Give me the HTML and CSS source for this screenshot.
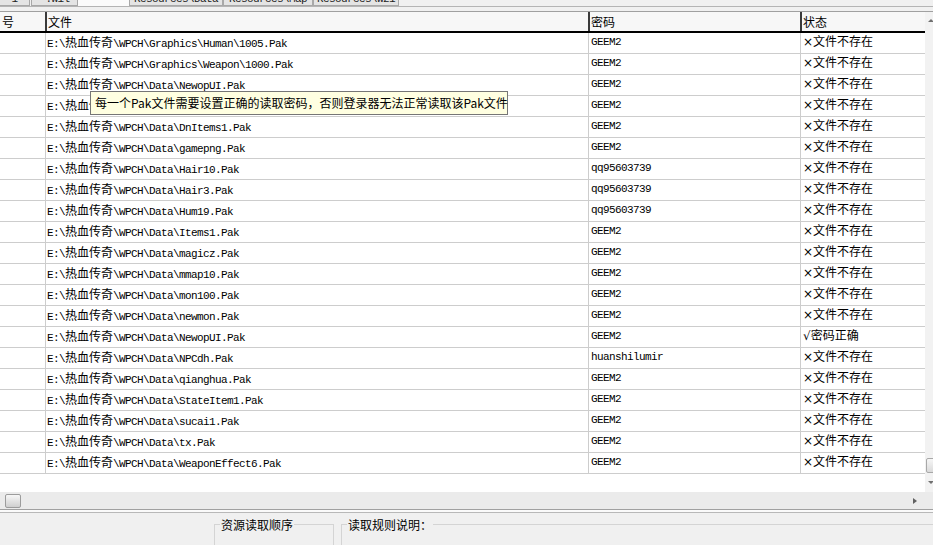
FILE: index.html
```html
<!DOCTYPE html>
<html lang="zh-CN">
<head>
<meta charset="utf-8">
<title>Pak</title>
<link rel="stylesheet" href="styles.css">
</head>
<body>
<div class="tabbar">
  <div class="tab t1"><span>1</span></div>
  <div class="tab t2"><span>*.wil</span></div>
  <div class="tabgap"></div>
  <div class="tab t3"><span>Resources\Data</span></div>
  <div class="tab t4"><span>Resources\Map</span></div>
  <div class="tab t5"><span>Resources\Wz1</span></div>
</div>
<div class="sep"></div>
<div class="list">
  <div class="table">
    <div class="hdr">
      <div class="hc c0">号</div>
      <div class="hc">文件</div>
      <div class="hc">密码</div>
      <div class="hc">状态</div>
    </div>
    <div class="row"><div class="c0"></div><div class="cf mono">E:\<span class="cj">热血传奇</span>\WPCH\Graphics\Human\1005.Pak</div><div class="cp mono">GEEM2</div><div class="cs">×文件不存在</div></div>
    <div class="row"><div class="c0"></div><div class="cf mono">E:\<span class="cj">热血传奇</span>\WPCH\Graphics\Weapon\1000.Pak</div><div class="cp mono">GEEM2</div><div class="cs">×文件不存在</div></div>
    <div class="row"><div class="c0"></div><div class="cf mono">E:\<span class="cj">热血传奇</span>\WPCH\Data\NewopUI.Pak</div><div class="cp mono">GEEM2</div><div class="cs">×文件不存在</div></div>
    <div class="row"><div class="c0"></div><div class="cf mono">E:\<span class="cj">热血传奇</span>\WPCH\Data\ChrSel.Pak</div><div class="cp mono">GEEM2</div><div class="cs">×文件不存在</div></div>
    <div class="row"><div class="c0"></div><div class="cf mono">E:\<span class="cj">热血传奇</span>\WPCH\Data\DnItems1.Pak</div><div class="cp mono">GEEM2</div><div class="cs">×文件不存在</div></div>
    <div class="row"><div class="c0"></div><div class="cf mono">E:\<span class="cj">热血传奇</span>\WPCH\Data\gamepng.Pak</div><div class="cp mono">GEEM2</div><div class="cs">×文件不存在</div></div>
    <div class="row"><div class="c0"></div><div class="cf mono">E:\<span class="cj">热血传奇</span>\WPCH\Data\Hair10.Pak</div><div class="cp mono">qq95603739</div><div class="cs">×文件不存在</div></div>
    <div class="row"><div class="c0"></div><div class="cf mono">E:\<span class="cj">热血传奇</span>\WPCH\Data\Hair3.Pak</div><div class="cp mono">qq95603739</div><div class="cs">×文件不存在</div></div>
    <div class="row"><div class="c0"></div><div class="cf mono">E:\<span class="cj">热血传奇</span>\WPCH\Data\Hum19.Pak</div><div class="cp mono">qq95603739</div><div class="cs">×文件不存在</div></div>
    <div class="row"><div class="c0"></div><div class="cf mono">E:\<span class="cj">热血传奇</span>\WPCH\Data\Items1.Pak</div><div class="cp mono">GEEM2</div><div class="cs">×文件不存在</div></div>
    <div class="row"><div class="c0"></div><div class="cf mono">E:\<span class="cj">热血传奇</span>\WPCH\Data\magicz.Pak</div><div class="cp mono">GEEM2</div><div class="cs">×文件不存在</div></div>
    <div class="row"><div class="c0"></div><div class="cf mono">E:\<span class="cj">热血传奇</span>\WPCH\Data\mmap10.Pak</div><div class="cp mono">GEEM2</div><div class="cs">×文件不存在</div></div>
    <div class="row"><div class="c0"></div><div class="cf mono">E:\<span class="cj">热血传奇</span>\WPCH\Data\mon100.Pak</div><div class="cp mono">GEEM2</div><div class="cs">×文件不存在</div></div>
    <div class="row"><div class="c0"></div><div class="cf mono">E:\<span class="cj">热血传奇</span>\WPCH\Data\newmon.Pak</div><div class="cp mono">GEEM2</div><div class="cs">×文件不存在</div></div>
    <div class="row"><div class="c0"></div><div class="cf mono">E:\<span class="cj">热血传奇</span>\WPCH\Data\NewopUI.Pak</div><div class="cp mono">GEEM2</div><div class="cs">√密码正确</div></div>
    <div class="row"><div class="c0"></div><div class="cf mono">E:\<span class="cj">热血传奇</span>\WPCH\Data\NPCdh.Pak</div><div class="cp mono">huanshilumir</div><div class="cs">×文件不存在</div></div>
    <div class="row"><div class="c0"></div><div class="cf mono">E:\<span class="cj">热血传奇</span>\WPCH\Data\qianghua.Pak</div><div class="cp mono">GEEM2</div><div class="cs">×文件不存在</div></div>
    <div class="row"><div class="c0"></div><div class="cf mono">E:\<span class="cj">热血传奇</span>\WPCH\Data\StateItem1.Pak</div><div class="cp mono">GEEM2</div><div class="cs">×文件不存在</div></div>
    <div class="row"><div class="c0"></div><div class="cf mono">E:\<span class="cj">热血传奇</span>\WPCH\Data\sucai1.Pak</div><div class="cp mono">GEEM2</div><div class="cs">×文件不存在</div></div>
    <div class="row"><div class="c0"></div><div class="cf mono">E:\<span class="cj">热血传奇</span>\WPCH\Data\tx.Pak</div><div class="cp mono">GEEM2</div><div class="cs">×文件不存在</div></div>
    <div class="row"><div class="c0"></div><div class="cf mono">E:\<span class="cj">热血传奇</span>\WPCH\Data\WeaponEffect6.Pak</div><div class="cp mono">GEEM2</div><div class="cs">×文件不存在</div></div>
    <div class="fill"></div>
  </div>
  <div class="vscroll">
    <div class="arrow-up"></div>
    <div class="vthumb"></div>
    <div class="arrow-down"></div>
  </div>
</div>
<div class="hscroll">
  <div class="hthumb"></div>
  <div class="arrow-right"></div>
</div>
<div class="split"></div>
<div class="panel">
  <fieldset class="grp g1"><legend>资源读取顺序</legend></fieldset>
  <fieldset class="grp g2"><legend>读取规则说明：</legend></fieldset>
</div>
<div class="tip">每一个Pak文件需要设置正确的读取密码，否则登录器无法正常读取该Pak文件</div>
</body>
</html>
```

FILE: styles.css
```css
html, body {
  margin: 0;
  padding: 0;
}
body {
  width: 933px;
  height: 545px;
  overflow: hidden;
  position: relative;
  background: #f0f0f0;
  font-family: "Noto Sans CJK SC", "Liberation Sans", sans-serif;
  font-size: 12px;
  color: #000;
}

/* tabs (cut off at top) */
.tabbar {
  display: flex;
  height: 6px;
  overflow: hidden;
  background: #f0f0f0;
}
.tab {
  box-sizing: border-box;
  height: 6px;
  overflow: hidden;
  background: #e4e4e4;
  border: 1px solid #a8a8a8;
  border-top: none;
  font-family: "Liberation Mono", monospace;
  font-size: 11px;
  letter-spacing: -0.6px;
  color: #222;
}
.tab span {
  display: block;
  margin-top: -7px;
  line-height: 12px;
  text-align: center;
  white-space: nowrap;
}
.t1 { width: 30px; border-left: none; }
.t2 { width: 47px; margin-left: 1px; }
.tabgap { width: 51px; background: #fbfbfb; }
.t3 { width: 94px; }
.t4 { width: 90px; }
.t5 { width: 86px; }

.sep {
  box-sizing: border-box;
  height: 5px;
  border-top: 1px solid #b4b4b4;
}

/* list */
.list {
  box-sizing: border-box;
  height: 481px;
  border-top: 1px solid #a0a0a0;
  display: flex;
}
.table {
  width: 925px;
  background: #fff;
  display: flex;
  flex-direction: column;
}
.hdr {
  box-sizing: border-box;
  height: 21px;
  display: grid;
  grid-template-columns: 45px 543px 212px 125px;
  background: #f7f7f7;
  border-bottom: 2px solid #000;
}
.hc {
  line-height: 19px;
  padding-left: 1px;
  border-left: 2px solid #3a3a3a;
  white-space: nowrap;
}
.hc.c0 {
  border-left: none;
  padding-left: 2px;
}
.row {
  box-sizing: border-box;
  height: 21px;
  display: grid;
  grid-template-columns: 45px 543px 212px 125px;
  border-bottom: 1px solid #cdcdcd;
}
.row > div {
  line-height: 18px;
  white-space: nowrap;
  overflow: hidden;
}
.cf, .cp, .cs {
  border-left: 1px solid #cdcdcd;
}
.cf { padding-left: 1px; }
.cp { padding-left: 2px; }
.cs {
  padding-left: 2px;
  font-family: "DejaVu Sans", "Noto Sans CJK SC", sans-serif;
  font-size: 12px;
}
.mono {
  font-family: "Liberation Mono", "Noto Sans CJK SC", monospace;
  font-size: 11px;
  letter-spacing: -0.6px;
}
.cj {
  font-family: "Noto Sans CJK SC", sans-serif;
  font-size: 12px;
  letter-spacing: 0;
}
.fill {
  flex: 1;
  background: #fff;
}

/* vertical scrollbar (cut off at right) */
.vscroll {
  width: 8px;
  background: #f2f2f2;
  display: flex;
  flex-direction: column;
}
.arrow-up {
  margin: 7px 0 0 3px;
  width: 0;
  height: 0;
  border-left: 3px solid transparent;
  border-right: 3px solid transparent;
  border-bottom: 3px solid #707070;
}
.vthumb {
  margin: auto 0 0 1px;
  box-sizing: border-box;
  width: 10px;
  height: 15px;
  border: 1px solid #a8a8a8;
  border-radius: 2px;
  background: linear-gradient(#f6f6f6, #dadada);
}
.arrow-down {
  margin: 8px 0 8px 3px;
  width: 0;
  height: 0;
  border-left: 3px solid transparent;
  border-right: 3px solid transparent;
  border-top: 3px solid #707070;
}

/* horizontal scrollbar */
.hscroll {
  height: 17px;
  background: #ebebeb;
  display: flex;
  align-items: center;
}
.hthumb {
  margin-left: 5px;
  box-sizing: border-box;
  width: 16px;
  height: 14px;
  border: 1px solid #9c9c9c;
  border-radius: 2px;
  background: linear-gradient(#f7f7f7, #cfcfcf);
}
.arrow-right {
  margin-left: auto;
  margin-right: 16px;
  width: 0;
  height: 0;
  border-top: 3px solid transparent;
  border-bottom: 3px solid transparent;
  border-left: 4px solid #606060;
}

.split {
  box-sizing: border-box;
  height: 4px;
  border-top: 1px solid #a0a0a0;
  border-bottom: 1px solid #b8b8b8;
  background: #fafafa;
}

/* bottom panel */
.panel {
  display: flex;
  padding-top: 5px;
}
.grp {
  margin: 0;
  padding: 0;
  height: 40px;
  box-sizing: border-box;
  border: 1px solid #d4d4d4;
  min-width: 0;
}
.grp legend {
  margin-left: 5px;
  padding: 0 1px;
  line-height: 13px;
  font-size: 12px;
  white-space: nowrap;
}
.g1 {
  margin-left: 214px;
  width: 120px;
}
.g2 {
  margin-left: 7px;
  flex: 1;
  margin-right: -3px;
}

/* tooltip */
.tip {
  position: absolute;
  left: 90px;
  top: 91px;
  box-sizing: border-box;
  width: 418px;
  height: 24px;
  padding-left: 4px;
  border: 1px solid #767676;
  background: #ffffe1;
  line-height: 22px;
  font-size: 12px;
  white-space: nowrap;
  color: #000;
}
```
